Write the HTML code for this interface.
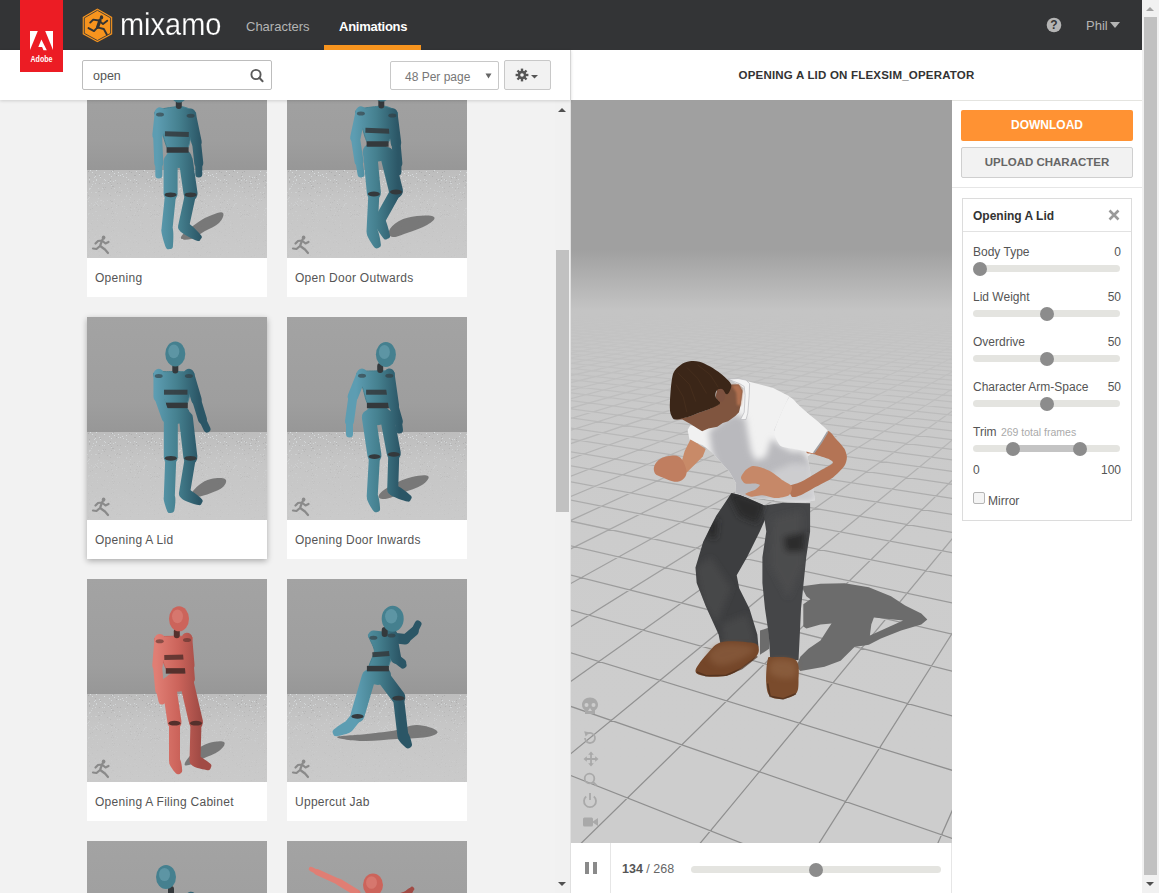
<!DOCTYPE html>
<html><head><meta charset="utf-8">
<style>
*{box-sizing:border-box;margin:0;padding:0}
html,body{width:1159px;height:893px;overflow:hidden;background:#f2f2f2;font-family:"Liberation Sans",sans-serif}
.abs{position:absolute}
svg{position:absolute;display:block}
#hdr{left:0;top:0;width:1142px;height:50px;background:#333436}
#adobe{left:20px;top:0;width:43px;height:72px;background:#ec1c24;z-index:6}
.nav{position:absolute;color:#b4b4b4;font-size:13px;top:17px;white-space:nowrap}
#left{left:0;top:0;width:571px;height:893px;background:#f2f2f2;overflow:hidden}
#searchbar{left:0;top:50px;width:571px;height:50px;background:#fff;box-shadow:0 1px 3px rgba(0,0,0,.15);z-index:3}
.card{position:absolute;width:180px;height:242px;background:#fff}
.card .img{position:absolute;left:0;top:0;width:180px;height:203px;overflow:hidden}
.card .lbl{position:absolute;left:8px;top:216px;font-size:12px;letter-spacing:0.28px;color:#555;white-space:nowrap}
#title{left:571px;top:50px;width:571px;height:50px;background:#fff;z-index:2}
#vp{left:571px;top:100px;width:381px;height:743px;z-index:1;overflow:hidden;background:#cbcbcb}
#ctrl{left:571px;top:843px;width:380px;height:50px;background:#fff}
#side{left:951px;top:100px;width:191px;height:793px;background:#fff;border-left:1px solid #e6e6e6}
.btn{position:absolute;left:10px;width:172px;border-radius:2px;text-align:center;font-weight:bold;font-size:12px;white-space:nowrap}
.lab{position:absolute;left:10px;font-size:12px;color:#555;white-space:nowrap}
.val{position:absolute;right:10px;font-size:12px;color:#555}
.trk{position:absolute;left:10px;width:147px;height:7px;border-radius:4px;background:#e4e4e0}
.thm{position:absolute;width:14px;height:14px;border-radius:50%;background:#8c8c8c}
#psb{left:1142px;top:0;width:17px;height:893px;background:#f1f1f1}

</style></head><body>
<div id="left" class="abs">
<svg width="0" height="0" style="position:absolute;left:0;top:0"><defs><pattern id="spk" width="90" height="60" patternUnits="userSpaceOnUse"><path fill="#dde2e4" d="M57 55h1v1h-1zM71 54h1v1h-1zM59 28h1v1h-1zM65 54h1v1h-1zM75 12h1v1h-1zM23 51h1v1h-1zM65 30h1v1h-1zM80 39h1v1h-1zM23 6h1v1h-1zM57 19h1v1h-1zM18 5h1v1h-1zM68 51h1v1h-1zM88 40h1v1h-1zM5 38h1v1h-1zM50 28h1v1h-1zM83 47h1v1h-1zM78 41h1v1h-1zM20 39h1v1h-1zM1 53h1v1h-1zM67 4h1v1h-1zM7 2h1v1h-1zM24 56h1v1h-1zM30 38h1v1h-1zM3 49h1v1h-1zM59 20h1v1h-1zM56 37h1v1h-1zM25 33h1v1h-1zM29 40h1v1h-1zM37 31h1v1h-1zM0 42h1v1h-1zM10 29h1v1h-1zM83 17h1v1h-1zM52 35h1v1h-1zM10 45h1v1h-1zM32 20h1v1h-1zM29 32h1v1h-1zM36 1h1v1h-1zM8 36h1v1h-1zM13 25h1v1h-1zM13 54h1v1h-1zM37 24h1v1h-1zM8 1h1v1h-1zM87 0h1v1h-1zM27 13h1v1h-1zM6 30h1v1h-1zM48 45h1v1h-1zM50 26h1v1h-1zM9 36h1v1h-1zM80 12h1v1h-1zM86 17h1v1h-1zM43 5h1v1h-1zM39 21h1v1h-1zM1 26h1v1h-1zM15 8h1v1h-1zM31 45h1v1h-1zM12 0h1v1h-1zM7 29h1v1h-1zM62 11h1v1h-1zM87 35h1v1h-1zM24 28h1v1h-1zM65 12h1v1h-1zM16 26h1v1h-1zM82 24h1v1h-1zM14 25h1v1h-1zM53 13h1v1h-1zM0 17h1v1h-1zM75 19h1v1h-1zM2 13h1v1h-1zM23 25h1v1h-1zM77 41h1v1h-1zM73 6h1v1h-1zM5 9h1v1h-1zM27 28h1v1h-1zM33 0h1v1h-1zM78 21h1v1h-1zM37 24h1v1h-1zM9 4h1v1h-1zM11 13h1v1h-1zM74 40h1v1h-1zM31 0h1v1h-1zM76 23h1v1h-1zM47 39h1v1h-1zM58 8h1v1h-1zM75 30h1v1h-1zM73 8h1v1h-1zM49 11h1v1h-1zM80 9h1v1h-1zM39 58h1v1h-1zM29 52h1v1h-1zM78 15h1v1h-1zM24 10h1v1h-1zM80 35h1v1h-1zM25 43h1v1h-1zM49 56h1v1h-1zM61 38h1v1h-1zM10 26h1v1h-1zM6 6h1v1h-1zM13 2h1v1h-1zM65 16h1v1h-1zM30 47h1v1h-1zM50 16h1v1h-1zM53 52h1v1h-1zM76 31h1v1h-1zM37 33h1v1h-1zM22 59h1v1h-1zM8 8h1v1h-1zM29 30h1v1h-1zM71 41h1v1h-1zM78 39h1v1h-1zM9 17h1v1h-1zM27 58h1v1h-1zM26 47h1v1h-1zM2 4h1v1h-1zM34 26h1v1h-1zM57 15h1v1h-1zM7 2h1v1h-1zM22 18h1v1h-1zM47 33h1v1h-1zM73 8h1v1h-1zM11 23h1v1h-1zM17 57h1v1h-1zM57 21h1v1h-1zM84 46h1v1h-1zM88 33h1v1h-1zM74 8h1v1h-1zM75 2h1v1h-1zM2 30h1v1h-1zM45 44h1v1h-1zM39 2h1v1h-1zM2 38h1v1h-1zM81 4h1v1h-1zM61 4h1v1h-1zM39 20h1v1h-1zM17 4h1v1h-1zM9 28h1v1h-1zM69 23h1v1h-1zM5 57h1v1h-1zM16 50h1v1h-1zM43 22h1v1h-1zM10 43h1v1h-1zM60 57h1v1h-1zM9 55h1v1h-1zM53 50h1v1h-1zM3 55h1v1h-1zM63 36h1v1h-1zM1 39h1v1h-1zM84 24h1v1h-1zM48 37h1v1h-1zM1 38h1v1h-1zM9 5h1v1h-1zM11 40h1v1h-1zM14 16h1v1h-1zM53 46h1v1h-1zM42 24h1v1h-1zM88 37h1v1h-1zM58 28h1v1h-1zM59 53h1v1h-1zM69 5h1v1h-1zM66 48h1v1h-1zM65 1h1v1h-1zM39 38h1v1h-1zM11 30h1v1h-1zM2 14h1v1h-1zM89 7h1v1h-1zM63 49h1v1h-1zM78 42h1v1h-1zM62 16h1v1h-1zM1 23h1v1h-1zM38 9h1v1h-1zM86 39h1v1h-1zM25 33h1v1h-1zM21 48h1v1h-1zM43 42h1v1h-1zM56 31h1v1h-1zM30 20h1v1h-1zM51 42h1v1h-1zM32 12h1v1h-1zM81 27h1v1h-1zM25 56h1v1h-1zM27 24h1v1h-1zM28 37h1v1h-1zM40 13h1v1h-1zM17 8h1v1h-1zM63 22h1v1h-1zM5 45h1v1h-1zM8 17h1v1h-1zM21 7h1v1h-1zM57 30h1v1h-1zM35 59h1v1h-1zM27 53h1v1h-1zM52 24h1v1h-1zM80 33h1v1h-1zM63 43h1v1h-1zM40 45h1v1h-1zM79 28h1v1h-1zM41 4h1v1h-1zM4 17h1v1h-1zM77 2h1v1h-1zM86 45h1v1h-1zM35 36h1v1h-1zM45 19h1v1h-1zM83 50h1v1h-1zM72 1h1v1h-1zM82 8h1v1h-1zM51 29h1v1h-1zM24 1h1v1h-1zM34 15h1v1h-1zM18 50h1v1h-1zM6 40h1v1h-1zM14 28h1v1h-1zM13 40h1v1h-1zM68 41h1v1h-1zM81 51h1v1h-1zM47 4h1v1h-1zM87 12h1v1h-1zM25 52h1v1h-1zM60 16h1v1h-1zM22 45h1v1h-1zM1 48h1v1h-1zM60 34h1v1h-1zM4 11h1v1h-1zM28 17h1v1h-1zM44 34h1v1h-1zM89 33h1v1h-1zM64 39h1v1h-1zM20 25h1v1h-1zM89 57h1v1h-1zM28 5h1v1h-1zM52 59h1v1h-1zM49 8h1v1h-1zM57 29h1v1h-1zM25 40h1v1h-1zM0 24h1v1h-1zM70 36h1v1h-1zM83 56h1v1h-1zM64 50h1v1h-1zM43 29h1v1h-1zM41 41h1v1h-1zM26 6h1v1h-1zM82 59h1v1h-1zM15 13h1v1h-1zM31 57h1v1h-1zM49 5h1v1h-1zM39 34h1v1h-1zM41 16h1v1h-1zM2 22h1v1h-1zM64 5h1v1h-1zM4 28h1v1h-1zM43 35h1v1h-1zM53 49h1v1h-1zM35 31h1v1h-1zM3 13h1v1h-1zM8 27h1v1h-1zM4 11h1v1h-1zM68 21h1v1h-1zM87 50h1v1h-1zM17 30h1v1h-1zM19 33h1v1h-1zM66 53h1v1h-1zM86 44h1v1h-1z"/><path fill="#a9a9a9" d="M56 56h1v1h-1zM63 37h1v1h-1zM88 5h1v1h-1zM28 28h1v1h-1zM67 35h1v1h-1zM37 53h1v1h-1zM71 40h1v1h-1zM21 33h1v1h-1zM65 53h1v1h-1zM71 16h1v1h-1zM39 42h1v1h-1zM48 54h1v1h-1zM78 13h1v1h-1zM38 54h1v1h-1zM18 34h1v1h-1zM67 17h1v1h-1zM73 31h1v1h-1zM25 26h1v1h-1zM68 7h1v1h-1zM64 0h1v1h-1zM77 24h1v1h-1zM3 34h1v1h-1zM5 33h1v1h-1zM51 34h1v1h-1zM72 7h1v1h-1zM62 5h1v1h-1zM88 10h1v1h-1zM8 59h1v1h-1zM68 29h1v1h-1zM52 58h1v1h-1zM51 17h1v1h-1zM31 30h1v1h-1zM63 8h1v1h-1zM43 27h1v1h-1zM60 33h1v1h-1zM40 6h1v1h-1zM24 26h1v1h-1zM79 1h1v1h-1zM33 8h1v1h-1zM89 49h1v1h-1zM2 2h1v1h-1zM24 9h1v1h-1zM29 0h1v1h-1zM87 18h1v1h-1zM41 46h1v1h-1zM45 15h1v1h-1zM79 31h1v1h-1zM13 31h1v1h-1zM74 7h1v1h-1zM65 39h1v1h-1zM32 45h1v1h-1zM25 44h1v1h-1zM67 56h1v1h-1zM55 1h1v1h-1zM48 40h1v1h-1zM52 52h1v1h-1zM67 39h1v1h-1zM20 34h1v1h-1zM26 55h1v1h-1zM80 34h1v1h-1zM81 13h1v1h-1zM67 13h1v1h-1zM69 39h1v1h-1zM75 54h1v1h-1zM17 14h1v1h-1zM80 51h1v1h-1zM44 57h1v1h-1zM23 20h1v1h-1zM77 20h1v1h-1zM24 13h1v1h-1zM24 56h1v1h-1zM12 8h1v1h-1zM30 8h1v1h-1zM11 16h1v1h-1zM49 6h1v1h-1zM55 53h1v1h-1zM53 34h1v1h-1zM16 12h1v1h-1zM51 40h1v1h-1zM87 51h1v1h-1zM2 6h1v1h-1zM25 36h1v1h-1zM87 22h1v1h-1zM46 7h1v1h-1zM64 40h1v1h-1zM43 32h1v1h-1zM87 53h1v1h-1zM24 51h1v1h-1zM9 30h1v1h-1zM13 1h1v1h-1zM4 48h1v1h-1zM70 39h1v1h-1zM65 57h1v1h-1zM72 30h1v1h-1zM18 12h1v1h-1zM23 7h1v1h-1zM26 11h1v1h-1zM20 18h1v1h-1zM86 6h1v1h-1zM74 3h1v1h-1zM17 43h1v1h-1zM59 4h1v1h-1zM12 20h1v1h-1zM50 29h1v1h-1zM54 32h1v1h-1zM45 27h1v1h-1zM26 38h1v1h-1zM47 0h1v1h-1zM81 44h1v1h-1zM5 54h1v1h-1zM25 11h1v1h-1zM52 29h1v1h-1zM46 47h1v1h-1zM47 25h1v1h-1zM24 38h1v1h-1zM21 6h1v1h-1zM65 50h1v1h-1zM1 20h1v1h-1zM10 51h1v1h-1zM80 25h1v1h-1zM72 38h1v1h-1zM24 32h1v1h-1zM74 21h1v1h-1zM33 17h1v1h-1zM14 47h1v1h-1zM20 52h1v1h-1zM51 8h1v1h-1zM42 56h1v1h-1zM68 44h1v1h-1zM47 49h1v1h-1zM55 48h1v1h-1zM23 25h1v1h-1zM26 46h1v1h-1zM23 4h1v1h-1zM43 19h1v1h-1zM60 6h1v1h-1zM1 56h1v1h-1zM45 40h1v1h-1zM79 3h1v1h-1zM29 17h1v1h-1zM85 19h1v1h-1zM43 13h1v1h-1zM84 25h1v1h-1zM72 11h1v1h-1zM68 4h1v1h-1zM49 32h1v1h-1zM63 41h1v1h-1zM27 44h1v1h-1zM15 48h1v1h-1zM50 36h1v1h-1zM2 7h1v1h-1zM78 6h1v1h-1zM30 16h1v1h-1zM56 25h1v1h-1zM64 3h1v1h-1zM25 41h1v1h-1zM48 0h1v1h-1zM12 16h1v1h-1zM32 17h1v1h-1zM43 35h1v1h-1z"/></pattern><linearGradient id="spkm" x1="0" y1="0" x2="0" y2="1"><stop offset="0" stop-color="#fff" stop-opacity="0.85"/><stop offset="0.25" stop-color="#fff" stop-opacity="0.4"/><stop offset="0.6" stop-color="#fff" stop-opacity="0.15"/><stop offset="1" stop-color="#fff" stop-opacity="0.1"/></linearGradient><mask id="spkmask" maskContentUnits="userSpaceOnUse"><rect y="115" width="180" height="88" fill="url(#spkm)"/></mask></defs></svg><div class="card" style="left:87px;top:55px"><svg width="180" height="203" style="left:0;top:0"><defs><linearGradient id="fl0" x1="0" y1="0" x2="0" y2="1"><stop offset="0" stop-color="#bdbdbd"/><stop offset="0.35" stop-color="#c6c6c6"/><stop offset="1" stop-color="#cacaca"/></linearGradient><linearGradient id="wl0" x1="0" y1="0" x2="0" y2="1"><stop offset="0" stop-color="#a3a3a3"/><stop offset="0.75" stop-color="#9e9e9e"/><stop offset="1" stop-color="#979797"/></linearGradient></defs><rect width="180" height="115" fill="url(#wl0)"/><rect y="115" width="180" height="88" fill="url(#fl0)"/><rect y="115" width="180" height="88" fill="url(#spk)" mask="url(#spkmask)"/><defs><linearGradient id="rg1" gradientUnits="userSpaceOnUse" x1="70" y1="0" x2="114" y2="0"><stop offset="0" stop-color="#5d9db2"/><stop offset="0.5" stop-color="#45808f"/><stop offset="1" stop-color="#2b5666"/></linearGradient></defs><path d="M94.0,182.0 C95.2,178.8 103.8,172.4 110.0,168.0 C116.2,163.6 119.8,162.0 125.0,160.0 C130.2,158.0 134.6,156.4 136.0,158.0 C137.4,159.6 135.6,164.4 132.0,168.0 C128.4,171.6 123.6,172.8 118.0,176.0 C112.4,179.2 108.8,182.8 104.0,184.0 C99.2,185.2 92.8,185.2 94.0,182.0 Z" fill="#6a6a6a" opacity="0.85"/><line x1="98.9" y1="106.0" x2="103.6" y2="138.8" stroke="url(#rg1)" stroke-width="14" stroke-linecap="round"/><line x1="103.6" y1="138.8" x2="96.5" y2="171.8" stroke="url(#rg1)" stroke-width="11" stroke-linecap="round"/><path d="M93.3,176.3 C94.6,178.7 107.2,184.8 110.0,185.8 C112.7,186.9 113.1,184.9 113.6,184.2 C114.2,183.4 115.9,182.4 114.0,180.2 C112.2,177.9 102.5,167.9 99.7,167.3 C97.0,166.8 91.9,173.8 93.3,176.3 Z" fill="url(#rg1)"/><ellipse cx="103.6" cy="139.8" rx="6" ry="2.4" fill="#34393c"/><line x1="83.6" y1="106.0" x2="83.6" y2="138.8" stroke="url(#rg1)" stroke-width="14" stroke-linecap="round"/><line x1="83.6" y1="138.8" x2="80.0" y2="174.0" stroke="url(#rg1)" stroke-width="11" stroke-linecap="round"/><path d="M74.5,174.7 C73.7,177.3 77.8,189.9 78.9,192.5 C80.0,195.0 81.7,194.1 82.7,194.0 C83.6,193.9 85.5,194.3 85.9,191.5 C86.2,188.8 87.0,175.5 85.5,173.3 C83.9,171.0 75.4,172.2 74.5,174.7 Z" fill="url(#rg1)"/><ellipse cx="83.6" cy="139.8" rx="6" ry="2.4" fill="#34393c"/><ellipse cx="91.8" cy="103.0" rx="13" ry="10" fill="url(#rg1)"/><path d="M68.0,56.6 C69.5,54.2 83.4,52.5 86.8,52.0 C90.2,51.5 94.3,51.3 96.8,52.0 C99.3,52.7 107.6,55.3 108.6,57.8 C109.6,60.3 106.6,69.5 105.6,73.8 C104.5,78.1 102.4,92.5 99.6,95.0 C96.8,97.5 84.6,97.6 81.6,95.0 C78.6,92.4 75.6,77.1 74.0,72.6 C72.4,68.1 66.5,59.0 68.0,56.6 Z" fill="url(#rg1)" stroke="#45808f" stroke-width="1"/><line x1="77.9" y1="78.8" x2="101.8" y2="79.4" stroke="#34393c" stroke-width="5" stroke-linecap="butt" opacity="0.85"/><line x1="79.6" y1="95.0" x2="101.6" y2="95.0" stroke="#34393c" stroke-width="5.5" stroke-linecap="butt" opacity="1"/><line x1="73.0" y1="57.6" x2="70.6" y2="80.0" stroke="url(#rg1)" stroke-width="10.5" stroke-linecap="round"/><line x1="70.6" y1="80.0" x2="71.8" y2="108.2" stroke="url(#rg1)" stroke-width="9.0" stroke-linecap="round"/><line x1="71.8" y1="108.2" x2="71.8" y2="120.0" stroke="url(#rg1)" stroke-width="7.0" stroke-linecap="round"/><ellipse cx="73.0" cy="59.6" rx="4" ry="2" fill="#34393c" opacity="0.6"/><line x1="103.6" y1="58.8" x2="109.5" y2="87.0" stroke="url(#rg1)" stroke-width="10.5" stroke-linecap="round"/><line x1="109.5" y1="87.0" x2="111.8" y2="108.2" stroke="url(#rg1)" stroke-width="9.0" stroke-linecap="round"/><line x1="111.8" y1="108.2" x2="111.8" y2="119.0" stroke="url(#rg1)" stroke-width="7.0" stroke-linecap="round"/><ellipse cx="103.6" cy="60.8" rx="4" ry="2" fill="#34393c" opacity="0.6"/><line x1="91.8" y1="47.0" x2="91.8" y2="51.0" stroke="#34393c" stroke-width="6" stroke-linecap="round"/><ellipse cx="92.0" cy="36.0" rx="9" ry="11.5" fill="#45808f"/><ellipse cx="90.5" cy="33.5" rx="5.0" ry="6.3" fill="#a8d4e2" opacity="0.25"/><g fill="none" stroke="#8a8a8a" stroke-width="2.2" stroke-linecap="round" stroke-linejoin="round"><path d="M15.5 184.5 L13 191 L9.5 194 L6 193.5 M13.2 191 L18 194.5 L21 198 M14.8 185.5 L11 186 L8.5 188.5 M15.5 186 L18.5 188.5 L21.5 187"/></g><ellipse cx="16.6" cy="182.6" rx="1.8" ry="2.2" fill="#8a8a8a"/></svg><div class="lbl">Opening</div></div>
<div class="card" style="left:287px;top:55px"><svg width="180" height="203" style="left:0;top:0"><defs><linearGradient id="fl1" x1="0" y1="0" x2="0" y2="1"><stop offset="0" stop-color="#bdbdbd"/><stop offset="0.35" stop-color="#c6c6c6"/><stop offset="1" stop-color="#cacaca"/></linearGradient><linearGradient id="wl1" x1="0" y1="0" x2="0" y2="1"><stop offset="0" stop-color="#a3a3a3"/><stop offset="0.75" stop-color="#9e9e9e"/><stop offset="1" stop-color="#979797"/></linearGradient></defs><rect width="180" height="115" fill="url(#wl1)"/><rect y="115" width="180" height="88" fill="url(#fl1)"/><rect y="115" width="180" height="88" fill="url(#spk)" mask="url(#spkmask)"/><defs><linearGradient id="rg2" gradientUnits="userSpaceOnUse" x1="67" y1="0" x2="111" y2="0"><stop offset="0" stop-color="#5d9db2"/><stop offset="0.5" stop-color="#45808f"/><stop offset="1" stop-color="#2b5666"/></linearGradient></defs><path d="M102.0,176.0 C103.2,172.8 106.4,169.0 112.0,166.0 C117.6,163.0 123.0,161.8 130.0,161.0 C137.0,160.2 145.0,160.2 147.0,162.0 C149.0,163.8 145.4,166.8 140.0,170.0 C134.6,173.2 126.8,175.6 120.0,178.0 C113.2,180.4 109.6,182.4 106.0,182.0 C102.4,181.6 100.8,179.2 102.0,176.0 Z" fill="#6a6a6a" opacity="0.85"/><line x1="99.8" y1="99.0" x2="109.0" y2="136.0" stroke="url(#rg2)" stroke-width="14" stroke-linecap="round"/><line x1="109.0" y1="136.0" x2="92.4" y2="165.7" stroke="url(#rg2)" stroke-width="11" stroke-linecap="round"/><path d="M87.4,168.0 C87.3,170.6 94.8,181.3 96.6,183.4 C98.4,185.6 99.8,184.2 100.6,183.8 C101.5,183.4 103.4,183.3 103.0,180.6 C102.6,177.8 99.5,165.1 97.4,163.4 C95.3,161.7 87.5,165.3 87.4,168.0 Z" fill="url(#rg2)"/><ellipse cx="109.0" cy="137.0" rx="6" ry="2.4" fill="#34393c"/><line x1="83.2" y1="99.0" x2="86.9" y2="138.0" stroke="url(#rg2)" stroke-width="14" stroke-linecap="round"/><line x1="86.9" y1="138.0" x2="85.0" y2="176.8" stroke="url(#rg2)" stroke-width="11" stroke-linecap="round"/><path d="M79.9,178.8 C79.5,181.2 85.8,190.4 87.3,192.3 C88.9,194.2 90.5,193.2 91.3,192.9 C92.2,192.5 94.0,192.1 93.9,189.7 C93.7,187.3 92.0,176.2 90.1,174.8 C88.3,173.3 80.3,176.5 79.9,178.8 Z" fill="url(#rg2)"/><ellipse cx="86.9" cy="139.0" rx="6" ry="2.4" fill="#34393c"/><ellipse cx="88.7" cy="97.0" rx="13" ry="10" fill="url(#rg2)"/><path d="M68.9,55.6 C70.6,53.3 85.8,52.0 89.3,51.5 C92.8,51.0 96.8,50.8 99.3,51.5 C101.8,52.2 109.4,54.9 110.3,57.5 C111.2,60.1 108.5,69.8 107.3,73.5 C106.1,77.2 102.6,87.2 99.6,89.0 C96.6,90.8 84.5,91.0 81.6,89.0 C78.7,87.0 76.4,75.5 74.9,71.6 C73.4,67.7 67.2,57.9 68.9,55.6 Z" fill="url(#rg2)" stroke="#45808f" stroke-width="1"/><line x1="78.4" y1="75.3" x2="102.7" y2="76.2" stroke="#34393c" stroke-width="5" stroke-linecap="butt" opacity="0.85"/><line x1="79.6" y1="89.0" x2="101.6" y2="89.0" stroke="#34393c" stroke-width="5.5" stroke-linecap="butt" opacity="1"/><line x1="73.9" y1="56.6" x2="68.4" y2="82.5" stroke="url(#rg2)" stroke-width="10.5" stroke-linecap="round"/><line x1="68.4" y1="82.5" x2="72.0" y2="106.5" stroke="url(#rg2)" stroke-width="9.0" stroke-linecap="round"/><line x1="72.0" y1="106.5" x2="74.0" y2="119.0" stroke="url(#rg2)" stroke-width="7.0" stroke-linecap="round"/><ellipse cx="73.9" cy="58.6" rx="4" ry="2" fill="#34393c" opacity="0.6"/><line x1="105.3" y1="58.5" x2="109.0" y2="88.0" stroke="url(#rg2)" stroke-width="10.5" stroke-linecap="round"/><line x1="109.0" y1="88.0" x2="110.9" y2="108.4" stroke="url(#rg2)" stroke-width="9.0" stroke-linecap="round"/><line x1="110.9" y1="108.4" x2="110.9" y2="117.0" stroke="url(#rg2)" stroke-width="7.0" stroke-linecap="round"/><ellipse cx="105.3" cy="60.5" rx="4" ry="2" fill="#34393c" opacity="0.6"/><line x1="94.3" y1="46.5" x2="94.3" y2="50.5" stroke="#34393c" stroke-width="6" stroke-linecap="round"/><ellipse cx="95.0" cy="35.0" rx="9" ry="11.5" fill="#45808f"/><ellipse cx="93.5" cy="32.5" rx="5.0" ry="6.3" fill="#a8d4e2" opacity="0.25"/><g fill="none" stroke="#8a8a8a" stroke-width="2.2" stroke-linecap="round" stroke-linejoin="round"><path d="M15.5 184.5 L13 191 L9.5 194 L6 193.5 M13.2 191 L18 194.5 L21 198 M14.8 185.5 L11 186 L8.5 188.5 M15.5 186 L18.5 188.5 L21.5 187"/></g><ellipse cx="16.6" cy="182.6" rx="1.8" ry="2.2" fill="#8a8a8a"/></svg><div class="lbl">Open Door Outwards</div></div>
<div class="card" style="left:87px;top:317px;box-shadow:0 2px 6px rgba(0,0,0,.3)"><svg width="180" height="203" style="left:0;top:0"><defs><linearGradient id="fl2" x1="0" y1="0" x2="0" y2="1"><stop offset="0" stop-color="#bdbdbd"/><stop offset="0.35" stop-color="#c6c6c6"/><stop offset="1" stop-color="#cacaca"/></linearGradient><linearGradient id="wl2" x1="0" y1="0" x2="0" y2="1"><stop offset="0" stop-color="#a3a3a3"/><stop offset="0.75" stop-color="#9e9e9e"/><stop offset="1" stop-color="#979797"/></linearGradient></defs><rect width="180" height="115" fill="url(#wl2)"/><rect y="115" width="180" height="88" fill="url(#fl2)"/><rect y="115" width="180" height="88" fill="url(#spk)" mask="url(#spkmask)"/><defs><linearGradient id="rg3" gradientUnits="userSpaceOnUse" x1="68" y1="0" x2="112" y2="0"><stop offset="0" stop-color="#5d9db2"/><stop offset="0.5" stop-color="#45808f"/><stop offset="1" stop-color="#2b5666"/></linearGradient></defs><path d="M104.0,178.0 C104.4,175.6 108.0,171.2 112.0,168.0 C116.0,164.8 118.8,163.2 124.0,162.0 C129.2,160.8 135.6,160.4 138.0,162.0 C140.4,163.6 138.8,167.2 136.0,170.0 C133.2,172.8 129.2,174.0 124.0,176.0 C118.8,178.0 114.0,179.6 110.0,180.0 C106.0,180.4 103.6,180.4 104.0,178.0 Z" fill="#6a6a6a" opacity="0.85"/><line x1="98.9" y1="101.0" x2="103.4" y2="140.3" stroke="url(#rg3)" stroke-width="14" stroke-linecap="round"/><line x1="103.4" y1="140.3" x2="97.4" y2="176.6" stroke="url(#rg3)" stroke-width="11" stroke-linecap="round"/><path d="M94.8,181.4 C96.3,183.6 108.7,187.5 111.3,188.1 C114.0,188.7 114.3,186.8 114.8,185.9 C115.2,185.1 116.6,183.8 114.7,181.9 C112.7,180.0 102.7,171.8 100.0,171.8 C97.4,171.7 93.3,179.3 94.8,181.4 Z" fill="url(#rg3)"/><ellipse cx="103.4" cy="141.3" rx="6" ry="2.4" fill="#34393c"/><line x1="83.8" y1="101.0" x2="83.8" y2="140.3" stroke="url(#rg3)" stroke-width="14" stroke-linecap="round"/><line x1="83.8" y1="140.3" x2="82.3" y2="179.7" stroke="url(#rg3)" stroke-width="11" stroke-linecap="round"/><path d="M76.8,180.3 C75.8,182.3 79.4,192.3 80.3,194.4 C81.3,196.5 83.1,196.1 84.0,196.0 C84.9,195.9 86.8,195.9 87.3,193.6 C87.8,191.4 89.2,180.9 87.8,179.1 C86.4,177.3 77.8,178.2 76.8,180.3 Z" fill="url(#rg3)"/><ellipse cx="83.8" cy="141.3" rx="6" ry="2.4" fill="#34393c"/><ellipse cx="89.8" cy="97.0" rx="13" ry="10" fill="url(#rg3)"/><path d="M66.7,56.1 C67.9,54.1 80.2,54.8 83.3,54.6 C86.4,54.4 90.5,54.4 93.3,54.6 C96.1,54.8 105.7,54.1 106.9,56.1 C108.1,58.1 104.8,68.3 103.9,72.1 C103.0,75.9 101.5,86.5 98.8,88.4 C96.1,90.3 83.8,90.3 80.8,88.4 C77.8,86.5 74.3,75.9 72.7,72.1 C71.1,68.3 65.5,58.1 66.7,56.1 Z" fill="url(#rg3)" stroke="#45808f" stroke-width="1"/><line x1="76.8" y1="75.2" x2="100.5" y2="75.2" stroke="#34393c" stroke-width="5" stroke-linecap="butt" opacity="0.85"/><line x1="78.8" y1="88.4" x2="100.8" y2="88.4" stroke="#34393c" stroke-width="5.5" stroke-linecap="butt" opacity="1"/><line x1="71.7" y1="57.1" x2="71.7" y2="79.8" stroke="url(#rg3)" stroke-width="10.5" stroke-linecap="round"/><line x1="71.7" y1="79.8" x2="79.2" y2="101.0" stroke="url(#rg3)" stroke-width="9.0" stroke-linecap="round"/><line x1="79.2" y1="101.0" x2="83.8" y2="112.0" stroke="url(#rg3)" stroke-width="7.0" stroke-linecap="round"/><ellipse cx="71.7" cy="59.1" rx="4" ry="2" fill="#34393c" opacity="0.6"/><line x1="101.9" y1="57.1" x2="109.5" y2="82.8" stroke="url(#rg3)" stroke-width="10.5" stroke-linecap="round"/><line x1="109.5" y1="82.8" x2="115.5" y2="102.5" stroke="url(#rg3)" stroke-width="9.0" stroke-linecap="round"/><line x1="115.5" y1="102.5" x2="120.0" y2="112.0" stroke="url(#rg3)" stroke-width="7.0" stroke-linecap="round"/><ellipse cx="101.9" cy="59.1" rx="4" ry="2" fill="#34393c" opacity="0.6"/><line x1="88.3" y1="49.6" x2="88.3" y2="53.6" stroke="#34393c" stroke-width="6" stroke-linecap="round"/><ellipse cx="88.3" cy="36.9" rx="10" ry="12.5" fill="#45808f"/><ellipse cx="86.8" cy="34.4" rx="5.5" ry="6.9" fill="#a8d4e2" opacity="0.25"/><g fill="none" stroke="#8a8a8a" stroke-width="2.2" stroke-linecap="round" stroke-linejoin="round"><path d="M15.5 184.5 L13 191 L9.5 194 L6 193.5 M13.2 191 L18 194.5 L21 198 M14.8 185.5 L11 186 L8.5 188.5 M15.5 186 L18.5 188.5 L21.5 187"/></g><ellipse cx="16.6" cy="182.6" rx="1.8" ry="2.2" fill="#8a8a8a"/></svg><div class="lbl">Opening A Lid</div></div>
<div class="card" style="left:287px;top:317px"><svg width="180" height="203" style="left:0;top:0"><defs><linearGradient id="fl3" x1="0" y1="0" x2="0" y2="1"><stop offset="0" stop-color="#bdbdbd"/><stop offset="0.35" stop-color="#c6c6c6"/><stop offset="1" stop-color="#cacaca"/></linearGradient><linearGradient id="wl3" x1="0" y1="0" x2="0" y2="1"><stop offset="0" stop-color="#a3a3a3"/><stop offset="0.75" stop-color="#9e9e9e"/><stop offset="1" stop-color="#979797"/></linearGradient></defs><rect width="180" height="115" fill="url(#wl3)"/><rect y="115" width="180" height="88" fill="url(#fl3)"/><rect y="115" width="180" height="88" fill="url(#spk)" mask="url(#spkmask)"/><defs><linearGradient id="rg4" gradientUnits="userSpaceOnUse" x1="69" y1="0" x2="113" y2="0"><stop offset="0" stop-color="#5d9db2"/><stop offset="0.5" stop-color="#45808f"/><stop offset="1" stop-color="#2b5666"/></linearGradient></defs><path d="M92.0,178.0 C93.4,175.2 98.4,171.6 105.0,168.0 C111.6,164.4 117.8,161.8 125.0,160.0 C132.2,158.2 139.0,157.4 141.0,159.0 C143.0,160.6 140.2,164.6 135.0,168.0 C129.8,171.4 122.4,173.2 115.0,176.0 C107.6,178.8 102.6,181.6 98.0,182.0 C93.4,182.4 90.6,180.8 92.0,178.0 Z" fill="#6a6a6a" opacity="0.85"/><line x1="100.0" y1="100.0" x2="106.8" y2="136.4" stroke="url(#rg4)" stroke-width="14" stroke-linecap="round"/><line x1="106.8" y1="136.4" x2="105.7" y2="172.7" stroke="url(#rg4)" stroke-width="11" stroke-linecap="round"/><path d="M103.1,177.5 C104.7,179.8 117.6,183.9 120.3,184.6 C123.1,185.2 123.3,183.3 123.8,182.5 C124.2,181.6 125.7,180.4 123.7,178.4 C121.6,176.5 111.1,168.0 108.3,167.9 C105.6,167.7 101.5,175.3 103.1,177.5 Z" fill="url(#rg4)"/><ellipse cx="106.8" cy="137.4" rx="6" ry="2.4" fill="#34393c"/><line x1="81.8" y1="100.0" x2="87.5" y2="138.6" stroke="url(#rg4)" stroke-width="14" stroke-linecap="round"/><line x1="87.5" y1="138.6" x2="85.2" y2="179.5" stroke="url(#rg4)" stroke-width="11" stroke-linecap="round"/><path d="M80.0,181.3 C79.5,183.5 85.1,192.3 86.5,194.1 C87.9,195.9 89.6,195.2 90.4,194.9 C91.3,194.6 93.1,194.2 93.1,191.9 C93.1,189.6 92.2,179.1 90.4,177.7 C88.7,176.3 80.5,179.1 80.0,181.3 Z" fill="url(#rg4)"/><ellipse cx="87.5" cy="139.6" rx="6" ry="2.4" fill="#34393c"/><ellipse cx="90.9" cy="98.3" rx="13" ry="10" fill="url(#rg4)"/><path d="M70.0,55.8 C71.4,53.7 84.9,54.1 88.2,53.9 C91.5,53.7 96.0,53.7 98.2,53.9 C100.4,54.1 106.6,53.7 107.3,55.8 C108.0,57.9 105.2,68.0 104.3,71.8 C103.4,75.6 102.5,86.6 99.9,88.5 C97.3,90.4 84.7,90.4 81.9,88.5 C79.1,86.6 77.4,75.6 76.0,71.8 C74.6,68.0 68.6,57.9 70.0,55.8 Z" fill="url(#rg4)" stroke="#45808f" stroke-width="1"/><line x1="79.1" y1="75.2" x2="101.2" y2="75.2" stroke="#34393c" stroke-width="5" stroke-linecap="butt" opacity="0.85"/><line x1="79.9" y1="88.5" x2="101.9" y2="88.5" stroke="#34393c" stroke-width="5.5" stroke-linecap="butt" opacity="1"/><line x1="75.0" y1="56.8" x2="65.9" y2="79.5" stroke="url(#rg4)" stroke-width="10.5" stroke-linecap="round"/><line x1="65.9" y1="79.5" x2="62.5" y2="104.5" stroke="url(#rg4)" stroke-width="9.0" stroke-linecap="round"/><line x1="62.5" y1="104.5" x2="62.5" y2="117.0" stroke="url(#rg4)" stroke-width="7.0" stroke-linecap="round"/><ellipse cx="75.0" cy="58.8" rx="4" ry="2" fill="#34393c" opacity="0.6"/><line x1="102.3" y1="56.8" x2="106.8" y2="88.6" stroke="url(#rg4)" stroke-width="10.5" stroke-linecap="round"/><line x1="106.8" y1="88.6" x2="111.4" y2="104.5" stroke="url(#rg4)" stroke-width="9.0" stroke-linecap="round"/><line x1="111.4" y1="104.5" x2="112.5" y2="113.0" stroke="url(#rg4)" stroke-width="7.0" stroke-linecap="round"/><ellipse cx="102.3" cy="58.8" rx="4" ry="2" fill="#34393c" opacity="0.6"/><line x1="93.2" y1="48.9" x2="93.2" y2="52.9" stroke="#34393c" stroke-width="6" stroke-linecap="round"/><ellipse cx="98.9" cy="37.5" rx="10" ry="12.5" fill="#45808f"/><ellipse cx="97.4" cy="35.0" rx="5.5" ry="6.9" fill="#a8d4e2" opacity="0.25"/><g fill="none" stroke="#8a8a8a" stroke-width="2.2" stroke-linecap="round" stroke-linejoin="round"><path d="M15.5 184.5 L13 191 L9.5 194 L6 193.5 M13.2 191 L18 194.5 L21 198 M14.8 185.5 L11 186 L8.5 188.5 M15.5 186 L18.5 188.5 L21.5 187"/></g><ellipse cx="16.6" cy="182.6" rx="1.8" ry="2.2" fill="#8a8a8a"/></svg><div class="lbl">Opening Door Inwards</div></div>
<div class="card" style="left:87px;top:579px"><svg width="180" height="203" style="left:0;top:0"><defs><linearGradient id="fl4" x1="0" y1="0" x2="0" y2="1"><stop offset="0" stop-color="#bdbdbd"/><stop offset="0.35" stop-color="#c6c6c6"/><stop offset="1" stop-color="#cacaca"/></linearGradient><linearGradient id="wl4" x1="0" y1="0" x2="0" y2="1"><stop offset="0" stop-color="#a3a3a3"/><stop offset="0.75" stop-color="#9e9e9e"/><stop offset="1" stop-color="#979797"/></linearGradient></defs><rect width="180" height="115" fill="url(#wl4)"/><rect y="115" width="180" height="88" fill="url(#fl4)"/><rect y="115" width="180" height="88" fill="url(#spk)" mask="url(#spkmask)"/><defs><linearGradient id="rg5" gradientUnits="userSpaceOnUse" x1="69" y1="0" x2="113" y2="0"><stop offset="0" stop-color="#e07e74"/><stop offset="0.5" stop-color="#cc645b"/><stop offset="1" stop-color="#a14b45"/></linearGradient></defs><path d="M98.0,184.0 C99.2,181.2 103.2,176.0 108.0,172.0 C112.8,168.0 116.2,165.8 122.0,164.0 C127.8,162.2 135.0,161.4 137.0,163.0 C139.0,164.6 136.4,168.6 132.0,172.0 C127.6,175.4 121.0,177.2 115.0,180.0 C109.0,182.8 105.4,185.2 102.0,186.0 C98.6,186.8 96.8,186.8 98.0,184.0 Z" fill="#6a6a6a" opacity="0.85"/><line x1="100.0" y1="104.5" x2="109.0" y2="143.2" stroke="url(#rg5)" stroke-width="14" stroke-linecap="round"/><line x1="109.0" y1="143.2" x2="108.0" y2="181.8" stroke="url(#rg5)" stroke-width="11" stroke-linecap="round"/><path d="M105.8,186.8 C107.2,188.8 118.2,190.9 120.6,191.2 C123.0,191.5 123.5,189.7 123.8,188.8 C124.2,188.0 125.2,186.4 123.4,184.8 C121.6,183.2 112.6,176.5 110.2,176.8 C107.9,177.0 104.4,184.9 105.8,186.8 Z" fill="url(#rg5)"/><ellipse cx="109.0" cy="144.2" rx="6" ry="2.4" fill="#55302c"/><line x1="81.8" y1="104.5" x2="87.5" y2="143.2" stroke="url(#rg5)" stroke-width="14" stroke-linecap="round"/><line x1="87.5" y1="143.2" x2="87.5" y2="181.8" stroke="url(#rg5)" stroke-width="11" stroke-linecap="round"/><path d="M82.4,183.9 C81.9,185.8 87.4,192.8 88.8,194.3 C90.1,195.8 91.9,195.2 92.7,194.9 C93.6,194.5 95.3,193.7 95.2,191.7 C95.2,189.7 94.3,180.8 92.6,179.7 C90.9,178.7 82.9,181.9 82.4,183.9 Z" fill="url(#rg5)"/><ellipse cx="87.5" cy="144.2" rx="6" ry="2.4" fill="#55302c"/><ellipse cx="90.9" cy="102.8" rx="13" ry="10" fill="url(#rg5)"/><path d="M67.7,59.2 C69.0,57.1 81.6,57.5 84.8,57.3 C88.0,57.1 92.4,57.2 94.8,57.3 C97.2,57.4 104.2,56.1 105.0,58.0 C105.8,59.9 102.7,70.0 102.0,74.0 C101.3,78.0 101.3,89.8 98.8,91.9 C96.3,94.0 83.7,93.8 80.8,91.9 C77.9,90.0 75.2,79.0 73.7,75.2 C72.2,71.4 66.4,61.3 67.7,59.2 Z" fill="url(#rg5)" stroke="#cc645b" stroke-width="1"/><line x1="77.3" y1="78.6" x2="99.5" y2="78.0" stroke="#55302c" stroke-width="5" stroke-linecap="butt" opacity="0.85"/><line x1="78.8" y1="91.9" x2="100.8" y2="91.9" stroke="#55302c" stroke-width="5.5" stroke-linecap="butt" opacity="1"/><line x1="72.7" y1="60.2" x2="70.5" y2="86.4" stroke="url(#rg5)" stroke-width="10.5" stroke-linecap="round"/><line x1="70.5" y1="86.4" x2="72.7" y2="111.4" stroke="url(#rg5)" stroke-width="9.0" stroke-linecap="round"/><line x1="72.7" y1="111.4" x2="75.0" y2="122.0" stroke="url(#rg5)" stroke-width="7.0" stroke-linecap="round"/><ellipse cx="72.7" cy="62.2" rx="4" ry="2" fill="#55302c" opacity="0.6"/><line x1="100.0" y1="59.0" x2="102.3" y2="86.4" stroke="url(#rg5)" stroke-width="10.5" stroke-linecap="round"/><line x1="102.3" y1="86.4" x2="103.4" y2="100.0" stroke="url(#rg5)" stroke-width="9.0" stroke-linecap="round"/><line x1="103.4" y1="100.0" x2="103.0" y2="104.0" stroke="url(#rg5)" stroke-width="7.0" stroke-linecap="round"/><ellipse cx="100.0" cy="61.0" rx="4" ry="2" fill="#55302c" opacity="0.6"/><line x1="89.8" y1="52.3" x2="89.8" y2="56.3" stroke="#55302c" stroke-width="6" stroke-linecap="round"/><ellipse cx="92.0" cy="39.8" rx="10" ry="12.5" fill="#cc645b"/><ellipse cx="90.5" cy="37.3" rx="5.5" ry="6.9" fill="#f4b0a8" opacity="0.25"/><g fill="none" stroke="#8a8a8a" stroke-width="2.2" stroke-linecap="round" stroke-linejoin="round"><path d="M15.5 184.5 L13 191 L9.5 194 L6 193.5 M13.2 191 L18 194.5 L21 198 M14.8 185.5 L11 186 L8.5 188.5 M15.5 186 L18.5 188.5 L21.5 187"/></g><ellipse cx="16.6" cy="182.6" rx="1.8" ry="2.2" fill="#8a8a8a"/></svg><div class="lbl">Opening A Filing Cabinet</div></div>
<div class="card" style="left:287px;top:579px"><svg width="180" height="203" style="left:0;top:0"><defs><linearGradient id="fl5" x1="0" y1="0" x2="0" y2="1"><stop offset="0" stop-color="#bdbdbd"/><stop offset="0.35" stop-color="#c6c6c6"/><stop offset="1" stop-color="#cacaca"/></linearGradient><linearGradient id="wl5" x1="0" y1="0" x2="0" y2="1"><stop offset="0" stop-color="#a3a3a3"/><stop offset="0.75" stop-color="#9e9e9e"/><stop offset="1" stop-color="#979797"/></linearGradient></defs><rect width="180" height="115" fill="url(#wl5)"/><rect y="115" width="180" height="88" fill="url(#fl5)"/><rect y="115" width="180" height="88" fill="url(#spk)" mask="url(#spkmask)"/><defs><linearGradient id="rg6" gradientUnits="userSpaceOnUse" x1="69" y1="0" x2="113" y2="0"><stop offset="0" stop-color="#5d9db2"/><stop offset="0.5" stop-color="#45808f"/><stop offset="1" stop-color="#2b5666"/></linearGradient></defs><path d="M50.0,158.0 C51.0,156.6 68.0,156.4 80.0,155.0 C92.0,153.6 100.0,152.8 110.0,151.0 C120.0,149.2 122.0,145.8 130.0,146.0 C138.0,146.2 148.0,149.6 150.0,152.0 C152.0,154.4 148.0,156.4 140.0,158.0 C132.0,159.6 123.0,159.2 110.0,160.0 C97.0,160.8 87.0,162.4 75.0,162.0 C63.0,161.6 49.0,159.4 50.0,158.0 Z" fill="#6a6a6a" opacity="0.85"/><line x1="97.7" y1="100.0" x2="111.4" y2="118.2" stroke="url(#rg6)" stroke-width="14" stroke-linecap="round"/><line x1="111.4" y1="118.2" x2="115.9" y2="156.8" stroke="url(#rg6)" stroke-width="11" stroke-linecap="round"/><path d="M111.2,159.6 C111.0,161.6 117.4,167.6 119.0,168.8 C120.6,170.0 122.2,169.2 123.0,168.7 C123.8,168.2 125.3,167.2 125.0,165.2 C124.7,163.2 122.5,154.7 120.6,154.0 C118.8,153.2 111.4,157.6 111.2,159.6 Z" fill="url(#rg6)"/><ellipse cx="111.4" cy="119.2" rx="6" ry="2.4" fill="#34393c"/><line x1="81.8" y1="97.7" x2="70.5" y2="136.4" stroke="url(#rg6)" stroke-width="14" stroke-linecap="round"/><line x1="70.5" y1="136.4" x2="61.4" y2="147.7" stroke="url(#rg6)" stroke-width="11" stroke-linecap="round"/><path d="M59.1,142.7 C56.8,142.5 48.2,149.2 46.5,150.8 C44.8,152.4 45.8,154.0 46.2,154.9 C46.6,155.7 47.1,157.5 49.5,157.2 C51.8,156.9 62.5,154.6 63.7,152.7 C65.0,150.8 61.4,143.0 59.1,142.7 Z" fill="url(#rg6)"/><ellipse cx="70.5" cy="137.4" rx="6" ry="2.4" fill="#34393c"/><ellipse cx="90.9" cy="96.0" rx="13" ry="10" fill="url(#rg6)"/><path d="M81.4,55.8 C82.0,54.0 90.2,56.1 92.7,56.1 C95.2,56.1 100.7,56.4 102.7,56.1 C104.7,55.8 109.1,51.9 109.5,53.5 C109.9,55.1 107.6,65.3 106.5,69.5 C105.4,73.7 102.8,87.3 99.9,89.6 C97.0,91.9 83.4,91.7 81.9,89.6 C80.4,87.5 87.5,75.7 87.4,71.8 C87.3,67.9 80.8,57.6 81.4,55.8 Z" fill="url(#rg6)" stroke="#45808f" stroke-width="1"/><line x1="85.4" y1="75.7" x2="102.4" y2="74.5" stroke="#34393c" stroke-width="5" stroke-linecap="butt" opacity="0.85"/><line x1="79.9" y1="89.6" x2="101.9" y2="89.6" stroke="#34393c" stroke-width="5.5" stroke-linecap="butt" opacity="1"/><line x1="86.4" y1="56.8" x2="118.2" y2="60.2" stroke="url(#rg6)" stroke-width="10.5" stroke-linecap="round"/><line x1="118.2" y1="60.2" x2="127.3" y2="52.3" stroke="url(#rg6)" stroke-width="9.0" stroke-linecap="round"/><line x1="127.3" y1="52.3" x2="131.0" y2="45.0" stroke="url(#rg6)" stroke-width="7.0" stroke-linecap="round"/><ellipse cx="86.4" cy="58.8" rx="4" ry="2" fill="#34393c" opacity="0.6"/><line x1="104.5" y1="54.5" x2="109.0" y2="79.5" stroke="url(#rg6)" stroke-width="10.5" stroke-linecap="round"/><line x1="109.0" y1="79.5" x2="114.8" y2="84.0" stroke="url(#rg6)" stroke-width="9.0" stroke-linecap="round"/><line x1="114.8" y1="84.0" x2="116.0" y2="86.0" stroke="url(#rg6)" stroke-width="7.0" stroke-linecap="round"/><ellipse cx="104.5" cy="56.5" rx="4" ry="2" fill="#34393c" opacity="0.6"/><line x1="97.7" y1="51.1" x2="97.7" y2="55.1" stroke="#34393c" stroke-width="6" stroke-linecap="round"/><ellipse cx="105.7" cy="39.8" rx="11" ry="13" fill="#45808f"/><ellipse cx="104.2" cy="37.3" rx="6.1" ry="7.2" fill="#a8d4e2" opacity="0.25"/><g fill="none" stroke="#8a8a8a" stroke-width="2.2" stroke-linecap="round" stroke-linejoin="round"><path d="M15.5 184.5 L13 191 L9.5 194 L6 193.5 M13.2 191 L18 194.5 L21 198 M14.8 185.5 L11 186 L8.5 188.5 M15.5 186 L18.5 188.5 L21.5 187"/></g><ellipse cx="16.6" cy="182.6" rx="1.8" ry="2.2" fill="#8a8a8a"/></svg><div class="lbl">Uppercut Jab</div></div>
<div class="card" style="left:87px;top:841px"><svg width="180" height="203" style="left:0;top:0"><defs><linearGradient id="fl10" x1="0" y1="0" x2="0" y2="1"><stop offset="0" stop-color="#bdbdbd"/><stop offset="0.35" stop-color="#c6c6c6"/><stop offset="1" stop-color="#cacaca"/></linearGradient><linearGradient id="wl10" x1="0" y1="0" x2="0" y2="1"><stop offset="0" stop-color="#a3a3a3"/><stop offset="0.75" stop-color="#9e9e9e"/><stop offset="1" stop-color="#979797"/></linearGradient></defs><rect width="180" height="115" fill="url(#wl10)"/><rect y="115" width="180" height="88" fill="url(#fl10)"/><rect y="115" width="180" height="88" fill="url(#spk)" mask="url(#spkmask)"/><defs><linearGradient id="rg7" gradientUnits="userSpaceOnUse" x1="68" y1="0" x2="112" y2="0"><stop offset="0" stop-color="#5d9db2"/><stop offset="0.5" stop-color="#45808f"/><stop offset="1" stop-color="#2b5666"/></linearGradient></defs><line x1="98.0" y1="100.0" x2="102.0" y2="138.0" stroke="url(#rg7)" stroke-width="14" stroke-linecap="round"/><line x1="102.0" y1="138.0" x2="100.0" y2="176.0" stroke="url(#rg7)" stroke-width="11" stroke-linecap="round"/><path d="M96.9,180.6 C97.9,182.6 107.8,186.3 110.1,186.9 C112.3,187.5 113.1,185.9 113.7,185.1 C114.2,184.3 115.4,182.9 113.9,181.1 C112.5,179.3 105.3,171.5 103.1,171.4 C100.8,171.4 96.0,178.5 96.9,180.6 Z" fill="url(#rg7)"/><ellipse cx="102.0" cy="139.0" rx="6" ry="2.4" fill="#34393c"/><line x1="82.0" y1="100.0" x2="82.0" y2="138.0" stroke="url(#rg7)" stroke-width="14" stroke-linecap="round"/><line x1="82.0" y1="138.0" x2="82.0" y2="178.0" stroke="url(#rg7)" stroke-width="11" stroke-linecap="round"/><path d="M76.6,178.8 C75.6,180.8 79.5,190.5 80.5,192.5 C81.6,194.5 83.4,194.1 84.3,194.0 C85.2,193.8 87.0,193.7 87.5,191.5 C87.9,189.3 88.9,178.9 87.4,177.2 C86.0,175.5 77.5,176.7 76.6,178.8 Z" fill="url(#rg7)"/><ellipse cx="82.0" cy="139.0" rx="6" ry="2.4" fill="#34393c"/><ellipse cx="90.0" cy="97.0" rx="13" ry="10" fill="url(#rg7)"/><path d="M67.0,57.0 C67.7,54.7 76.4,53.5 79.0,53.0 C81.6,52.5 85.5,52.8 89.0,53.0 C92.5,53.2 107.0,52.9 109.0,55.0 C111.0,57.1 107.2,67.0 106.0,71.0 C104.8,75.0 101.9,86.9 99.0,89.0 C96.1,91.1 84.0,90.9 81.0,89.0 C78.0,87.1 74.6,76.7 73.0,73.0 C71.4,69.3 66.3,59.3 67.0,57.0 Z" fill="url(#rg7)" stroke="#45808f" stroke-width="1"/><line x1="77.0" y1="76.0" x2="101.8" y2="75.0" stroke="#34393c" stroke-width="5" stroke-linecap="butt" opacity="0.85"/><line x1="79.0" y1="89.0" x2="101.0" y2="89.0" stroke="#34393c" stroke-width="5.5" stroke-linecap="butt" opacity="1"/><line x1="72.0" y1="58.0" x2="66.0" y2="80.0" stroke="url(#rg7)" stroke-width="10.5" stroke-linecap="round"/><line x1="66.0" y1="80.0" x2="64.0" y2="104.0" stroke="url(#rg7)" stroke-width="9.0" stroke-linecap="round"/><line x1="64.0" y1="104.0" x2="64.0" y2="116.0" stroke="url(#rg7)" stroke-width="7.0" stroke-linecap="round"/><ellipse cx="72.0" cy="60.0" rx="4" ry="2" fill="#34393c" opacity="0.6"/><line x1="104.0" y1="56.0" x2="108.0" y2="80.0" stroke="url(#rg7)" stroke-width="10.5" stroke-linecap="round"/><line x1="108.0" y1="80.0" x2="112.0" y2="104.0" stroke="url(#rg7)" stroke-width="9.0" stroke-linecap="round"/><line x1="112.0" y1="104.0" x2="112.0" y2="116.0" stroke="url(#rg7)" stroke-width="7.0" stroke-linecap="round"/><ellipse cx="104.0" cy="58.0" rx="4" ry="2" fill="#34393c" opacity="0.6"/><line x1="84.0" y1="48.0" x2="84.0" y2="52.0" stroke="#34393c" stroke-width="6" stroke-linecap="round"/><ellipse cx="79.0" cy="36.0" rx="10" ry="12" fill="#45808f"/><ellipse cx="77.5" cy="33.5" rx="5.5" ry="6.6" fill="#a8d4e2" opacity="0.25"/></svg></div>
<div class="card" style="left:287px;top:841px"><svg width="180" height="203" style="left:0;top:0"><defs><linearGradient id="fl11" x1="0" y1="0" x2="0" y2="1"><stop offset="0" stop-color="#bdbdbd"/><stop offset="0.35" stop-color="#c6c6c6"/><stop offset="1" stop-color="#cacaca"/></linearGradient><linearGradient id="wl11" x1="0" y1="0" x2="0" y2="1"><stop offset="0" stop-color="#a3a3a3"/><stop offset="0.75" stop-color="#9e9e9e"/><stop offset="1" stop-color="#979797"/></linearGradient></defs><rect width="180" height="115" fill="url(#wl11)"/><rect y="115" width="180" height="88" fill="url(#fl11)"/><rect y="115" width="180" height="88" fill="url(#spk)" mask="url(#spkmask)"/><defs><linearGradient id="rg8" gradientUnits="userSpaceOnUse" x1="70" y1="0" x2="114" y2="0"><stop offset="0" stop-color="#e07e74"/><stop offset="0.5" stop-color="#cc645b"/><stop offset="1" stop-color="#a14b45"/></linearGradient></defs><line x1="100.0" y1="104.0" x2="104.0" y2="142.0" stroke="url(#rg8)" stroke-width="14" stroke-linecap="round"/><line x1="104.0" y1="142.0" x2="102.0" y2="180.0" stroke="url(#rg8)" stroke-width="11" stroke-linecap="round"/><path d="M98.9,184.6 C99.9,186.6 109.8,190.3 112.1,190.9 C114.3,191.5 115.1,189.9 115.7,189.1 C116.2,188.3 117.4,186.9 115.9,185.1 C114.5,183.3 107.3,175.5 105.1,175.4 C102.8,175.4 98.0,182.5 98.9,184.6 Z" fill="url(#rg8)"/><ellipse cx="104.0" cy="143.0" rx="6" ry="2.4" fill="#55302c"/><line x1="84.0" y1="104.0" x2="84.0" y2="142.0" stroke="url(#rg8)" stroke-width="14" stroke-linecap="round"/><line x1="84.0" y1="142.0" x2="84.0" y2="180.0" stroke="url(#rg8)" stroke-width="11" stroke-linecap="round"/><path d="M78.6,180.8 C77.6,182.8 81.5,192.5 82.5,194.5 C83.6,196.5 85.4,196.1 86.3,196.0 C87.2,195.8 89.0,195.7 89.5,193.5 C89.9,191.3 90.9,180.9 89.4,179.2 C88.0,177.5 79.5,178.7 78.6,180.8 Z" fill="url(#rg8)"/><ellipse cx="84.0" cy="143.0" rx="6" ry="2.4" fill="#55302c"/><ellipse cx="92.0" cy="102.0" rx="13" ry="10" fill="url(#rg8)"/><path d="M65.0,51.0 C66.4,50.3 79.7,59.8 83.0,61.0 C86.3,62.2 89.7,61.5 93.0,61.0 C96.3,60.5 109.2,55.6 111.0,57.0 C112.8,58.4 109.2,68.8 108.0,73.0 C106.8,77.2 103.9,90.7 101.0,93.0 C98.1,95.3 86.5,96.0 83.0,93.0 C79.5,90.0 73.1,71.9 71.0,67.0 C68.9,62.1 63.6,51.7 65.0,51.0 Z" fill="url(#rg8)" stroke="#cc645b" stroke-width="1"/><line x1="76.8" y1="75.0" x2="103.8" y2="78.0" stroke="#55302c" stroke-width="5" stroke-linecap="butt" opacity="0.85"/><line x1="81.0" y1="93.0" x2="103.0" y2="93.0" stroke="#55302c" stroke-width="5.5" stroke-linecap="butt" opacity="1"/><line x1="70.0" y1="52.0" x2="52.0" y2="41.0" stroke="url(#rg8)" stroke-width="6.825" stroke-linecap="round"/><line x1="52.0" y1="41.0" x2="30.0" y2="31.0" stroke="url(#rg8)" stroke-width="5.8500000000000005" stroke-linecap="round"/><line x1="30.0" y1="31.0" x2="24.0" y2="28.0" stroke="url(#rg8)" stroke-width="4.55" stroke-linecap="round"/><ellipse cx="70.0" cy="54.0" rx="4" ry="2" fill="#55302c" opacity="0.6"/><line x1="106.0" y1="58.0" x2="118.0" y2="54.0" stroke="url(#rg8)" stroke-width="6.825" stroke-linecap="round"/><line x1="118.0" y1="54.0" x2="123.0" y2="50.0" stroke="url(#rg8)" stroke-width="5.8500000000000005" stroke-linecap="round"/><line x1="123.0" y1="50.0" x2="125.0" y2="48.0" stroke="url(#rg8)" stroke-width="4.55" stroke-linecap="round"/><ellipse cx="106.0" cy="60.0" rx="4" ry="2" fill="#55302c" opacity="0.6"/><line x1="88.0" y1="56.0" x2="88.0" y2="60.0" stroke="#55302c" stroke-width="6" stroke-linecap="round"/><ellipse cx="86.0" cy="44.0" rx="10" ry="11.5" fill="#cc645b"/><ellipse cx="84.5" cy="41.5" rx="5.5" ry="6.3" fill="#f4b0a8" opacity="0.25"/></svg></div>
<div class="abs" style="left:555px;top:100px;width:15px;height:793px;background:#f1f1f1"></div><div class="abs" style="left:556px;top:250px;width:13px;height:262px;background:#c1c1c1"></div><svg width="10" height="6" style="left:557px;top:107px"><polygon points="1,5 9,5 5,1" fill="#505050"/></svg><svg width="10" height="6" style="left:557px;top:881px"><polygon points="1,1 9,1 5,5" fill="#505050"/></svg><div class="abs" style="left:570px;top:50px;width:1px;height:843px;background:#e0e0e0"></div></div>
<div id="searchbar" class="abs">
<div class="abs" style="left:570px;top:0;width:1px;height:50px;background:#d5d5d5"></div>
<div class="abs" style="left:82px;top:10px;width:190px;height:30px;border:1px solid #bdbdbd;border-radius:2px;background:#fff"></div>
<div class="abs" style="left:93px;top:19px;font-size:12.5px;color:#555">open</div>
<svg width="16" height="16" style="left:249px;top:18px"><circle cx="7" cy="6.5" r="4.6" fill="none" stroke="#5a5a5a" stroke-width="1.9"/><line x1="10.3" y1="9.8" x2="13.6" y2="13.2" stroke="#5a5a5a" stroke-width="2" stroke-linecap="round"/></svg>
<div class="abs" style="left:390px;top:11px;width:109px;height:29px;border:1px solid #c8c8c8;border-radius:2px;background:#fff"></div>
<div class="abs" style="left:405px;top:20px;font-size:12px;color:#777">48 Per page</div>
<svg width="8" height="8" style="left:485px;top:23px"><polygon points="0.5,0.5 6.5,0.5 3.5,5.5" fill="#666"/></svg>
<div class="abs" style="left:504px;top:10px;width:47px;height:30px;border:1px solid #c8c8c8;border-radius:2px;background:#f2f2f2"></div>
<svg width="26" height="14" style="left:515px;top:18px">
<g fill="#555"><circle cx="7" cy="7" r="4.2"/>
<rect x="5.8" y="0.6" width="2.4" height="12.8"/><rect x="0.6" y="5.8" width="12.8" height="2.4"/>
<rect x="5.8" y="0.6" width="2.4" height="12.8" transform="rotate(45 7 7)"/><rect x="5.8" y="0.6" width="2.4" height="12.8" transform="rotate(-45 7 7)"/></g>
<circle cx="7" cy="7" r="1.8" fill="#f2f2f2"/>
<polygon points="16,7 23,7 19.5,10.5" fill="#555"/>
</svg>
</div>
<div id="hdr" class="abs"></div>
<div id="adobe" class="abs">
<svg width="43" height="72" style="left:0;top:0">
<polygon fill="#fff" points="10,31 17.8,31 10,50"/>
<polygon fill="#fff" points="25.2,31 33,31 33,50"/>
<polygon fill="#fff" points="21.4,39.4 26.8,50.3 23.5,50.3 22.1,47 18.3,47"/>
<text x="21.5" y="61.5" fill="#fff" font-size="9" font-weight="bold" text-anchor="middle" font-family="Liberation Sans" textLength="22" lengthAdjust="spacingAndGlyphs">Adobe</text>
</svg>
</div>
<svg width="32" height="36" style="left:82px;top:7px;z-index:5">
<polygon points="15.4,1.6 30.2,10 30.2,27.2 15.4,35.2 0.7,27.2 0.7,10" fill="#f7941e"/>
<polygon points="15.4,3.3 28.6,10.9 28.6,26.3 15.4,33.5 2.3,26.3 2.3,10.9" fill="none" stroke="#3a3a3a" stroke-width="0.9"/>
<ellipse cx="19.5" cy="10.4" rx="1.7" ry="2.1" fill="#333"/>
<path d="M18 13.2 L15.6 20.3" stroke="#333" stroke-width="3.2" stroke-linecap="round"/>
<path d="M16.7 13.5 L11.2 12.6 L8.2 15.6 M17.6 14.3 L21 16.9 L25.2 13.7 M15.4 20.3 L12 24.1 L6.5 21.1 M16.3 20.7 L21.8 22 L24.8 27.5" stroke="#333" stroke-width="1.9" fill="none" stroke-linecap="round" stroke-linejoin="round"/>
</svg>
<div class="abs" style="left:120px;top:6px;z-index:5;color:#fff;font-size:32px;white-space:nowrap;transform-origin:0 0;transform:scaleX(0.905);-webkit-text-stroke:0.25px #333436">mixamo</div>
<div class="nav" style="left:246px;top:19px;z-index:5">Characters</div>
<div class="nav" style="left:339px;top:19px;color:#fff;font-weight:bold;letter-spacing:-0.25px;z-index:5">Animations</div>
<div class="abs" style="left:324px;top:45px;width:97px;height:5px;background:#f7941e;z-index:5"></div>
<svg width="16" height="16" style="left:1046px;top:17px;z-index:5">
<circle cx="8" cy="8" r="7.3" fill="#b4b4b4"/>
<text x="8" y="12.3" font-size="12" font-weight="bold" fill="#333436" text-anchor="middle" font-family="Liberation Sans">?</text>
</svg>
<div class="nav" style="left:1086px;z-index:5;font-size:13px;top:18px">Phil</div>
<svg width="10" height="6" style="left:1110px;top:22px;z-index:5"><polygon points="0,0 10,0 5,6" fill="#b4b4b4"/></svg>
<div id="vp" class="abs"><svg width="381" height="743" style="left:0;top:0">
<defs><filter id="bl3b" x="-20%" y="-20%" width="140%" height="140%"><feGaussianBlur stdDeviation="3"/></filter></defs><defs><linearGradient id="fog" x1="0" y1="0" x2="0" y2="743" gradientUnits="userSpaceOnUse"><stop offset="0" stop-color="#a0a0a0" stop-opacity="1"/><stop offset="0.202" stop-color="#a0a0a0" stop-opacity="1"/><stop offset="0.283" stop-color="#c4c4c4" stop-opacity="1"/><stop offset="0.336" stop-color="#c6c6c6" stop-opacity="0.93"/><stop offset="0.404" stop-color="#c8c8c8" stop-opacity="0.82"/><stop offset="0.471" stop-color="#c9c9c9" stop-opacity="0.66"/><stop offset="0.565" stop-color="#cacaca" stop-opacity="0.42"/><stop offset="0.673" stop-color="#cbcbcb" stop-opacity="0.18"/><stop offset="0.808" stop-color="#cbcbcb" stop-opacity="0.03"/><stop offset="0.9" stop-color="#cbcbcb" stop-opacity="0"/></linearGradient></defs>
<rect width="381" height="743" fill="#cdcdcd"/>
<path d="M0.9 200.0L-7228.5 1000.0M15.5 200.0L-7048.6 1000.0M30.0 200.0L-6869.1 1000.0M44.5 200.0L-6689.9 1000.0M59.0 200.0L-6510.9 1000.0M73.4 200.0L-6332.2 1000.0M87.8 200.0L-6153.8 1000.0M102.3 200.0L-5975.7 1000.0M116.6 200.0L-5797.9 1000.0M131.0 200.0L-5620.4 1000.0M145.3 200.0L-5443.1 1000.0M159.7 200.0L-5266.1 1000.0M174.0 200.0L-5089.4 1000.0M188.2 200.0L-4913.0 1000.0M202.5 200.0L-4736.8 1000.0M216.7 200.0L-4560.9 1000.0M230.9 200.0L-4385.3 1000.0M245.1 200.0L-4210.0 1000.0M259.3 200.0L-4035.0 1000.0M273.4 200.0L-3860.2 1000.0M287.5 200.0L-3685.7 1000.0M301.6 200.0L-3511.5 1000.0M315.7 200.0L-3337.5 1000.0M329.7 200.0L-3163.8 1000.0M343.8 200.0L-2990.4 1000.0M357.8 200.0L-2817.3 1000.0M371.7 200.0L-2644.4 1000.0M385.7 200.0L-2471.8 1000.0M399.6 200.0L-2299.5 1000.0M413.6 200.0L-2127.4 1000.0M427.5 200.0L-1955.6 1000.0M441.3 200.0L-1784.1 1000.0M455.2 200.0L-1612.8 1000.0M469.0 200.0L-1441.8 1000.0M482.8 200.0L-1271.1 1000.0M496.6 200.0L-1100.6 1000.0M510.4 200.0L-930.4 1000.0M524.1 200.0L-760.5 1000.0M537.9 200.0L-590.8 1000.0M551.6 200.0L-421.4 1000.0M565.3 200.0L-252.2 1000.0M578.9 200.0L-83.4 1000.0M592.6 200.0L85.3 1000.0M606.2 200.0L253.7 1000.0M-11.0 167.2L389.0 180.4M-11.0 167.6L389.0 180.9M-11.0 168.1L389.0 181.5M-11.0 168.5L389.0 182.1M-11.0 169.0L389.0 182.7M-11.0 169.5L389.0 183.3M-11.0 169.9L389.0 183.9M-11.0 170.4L389.0 184.5M-11.0 170.9L389.0 185.2M-11.0 171.5L389.0 185.9M-11.0 172.0L389.0 186.5M-11.0 172.5L389.0 187.2M-11.0 173.1L389.0 188.0M-11.0 173.7L389.0 188.7M-11.0 174.2L389.0 189.4M-11.0 174.8L389.0 190.2M-11.0 175.5L389.0 191.0M-11.0 176.1L389.0 191.8M-11.0 176.7L389.0 192.6M-11.0 177.4L389.0 193.5M-11.0 178.1L389.0 194.4M-11.0 178.8L389.0 195.3M-11.0 179.5L389.0 196.2M-11.0 180.2L389.0 197.2M-11.0 181.0L389.0 198.1M-11.0 181.8L389.0 199.1M-11.0 182.6L389.0 200.2M-11.0 183.4L389.0 201.3M-11.0 184.3L389.0 202.4M-11.0 185.2L389.0 203.5M-11.0 186.1L389.0 204.7M-11.0 187.0L389.0 205.9M-11.0 188.0L389.0 207.1M-11.0 189.0L389.0 208.4M-11.0 190.0L389.0 209.7M-11.0 191.1L389.0 211.1M-11.0 192.2L389.0 212.5M-11.0 193.3L389.0 214.0M-11.0 194.5L389.0 215.5M-11.0 195.7L389.0 217.1M-11.0 197.0L389.0 218.8M-11.0 198.3L389.0 220.5M-11.0 199.7L389.0 222.2M-11.0 201.1L389.0 224.1M-11.0 202.6L389.0 226.0M-11.0 204.2L389.0 228.0M-11.0 205.8L389.0 230.1M-11.0 207.5L389.0 232.2M-11.0 209.2L389.0 234.5M-11.0 211.0L389.0 236.8M-11.0 213.0L389.0 239.3M-11.0 215.0L389.0 241.9M-11.0 217.1L389.0 244.6M-11.0 219.3L389.0 247.4M-11.0 221.6L389.0 250.4M-11.0 224.0L389.0 253.5M-11.0 226.5L389.0 256.8M-11.0 229.2L389.0 260.3M-11.0 232.1L389.0 263.9M-11.0 235.1L389.0 267.8M-11.0 238.3L389.0 271.9M-11.0 241.7L389.0 276.3M-11.0 245.2L389.0 280.9M-11.0 249.1L389.0 285.8M-11.0 253.1L389.0 291.0M-11.0 257.5L389.0 296.7M-11.0 262.2L389.0 302.7M-11.0 267.2L389.0 309.1M-11.0 272.6L389.0 316.1M-11.0 278.4L389.0 323.6M-11.0 284.8L389.0 331.8M-11.0 291.6L389.0 340.6M-11.0 299.1L389.0 350.3M-11.0 307.4L389.0 360.9M-11.0 316.4L389.0 372.5M-11.0 326.4L389.0 385.4M-11.0 337.5L389.0 399.7M-11.0 350.0L389.0 415.7M-11.0 363.9L389.0 433.7M-11.0 379.8L389.0 454.2M-11.0 397.9L389.0 477.5M-11.0 418.9L389.0 504.5M-11.0 443.3L389.0 536.0M-11.0 472.3L389.0 573.2M-11.0 507.0L389.0 618.0M-11.0 549.5L389.0 672.7M-11.0 602.7L389.0 741.2M-11.0 671.3L389.0 829.5" stroke="#8f8f8f" stroke-width="1.25" fill="none"/>
<rect width="381" height="743" fill="url(#fog)"/>
<path d="M231.3,486.2 249.5,483.8 273.7,483.2 297.8,487.2 320.0,496.3 334.1,505.4 350.3,513.4 356.3,519.5 350.3,524.5 330.1,530.6 309.9,538.6 297.8,544.7 291.8,545.7 283.7,546.7 269.6,560.8 253.5,566.8 229.3,570.9 225.3,566.8 229.3,556.8 237.4,548.7 249.5,540.6 258.5,526.5 260.6,523.5 249.5,524.5 235.4,528.5 232.3,526.5 232.3,504.3 239.4,499.3 235.4,496.3 232.3,490.2Z M302.9,517.4 332.1,520.5 298.9,535.6 300.3,524.5Z" fill="#6c6c6c" fill-rule="evenodd"/><polygon points="189.0,530.6 198.1,527.5 198.1,548.7 189.0,554.7" fill="#6c6c6c"/>
<defs><clipPath id="legclip"><polygon points="160.5,392.9 170.8,395.5 194.0,405.8 199.1,408.3 188.8,431.5 176.0,457.3 165.7,475.3 168.2,488.2 178.5,508.8 186.3,534.5 187.5,547.4 176.0,550.0 150.2,547.4 147.6,534.5 134.8,506.2 125.7,483.0 124.5,467.6 132.2,441.8 145.1,416.1"/><polygon points="191.4,405.8 212.0,402.7 239.1,403.2 239.1,431.5 235.2,457.3 232.6,483.0 230.0,508.8 228.8,534.5 227.5,560.3 199.1,557.7 197.8,534.5 194.0,508.8 191.4,483.0 191.4,457.3 195.3,431.5"/></clipPath></defs><polygon points="160.5,392.9 170.8,395.5 194.0,405.8 199.1,408.3 188.8,431.5 176.0,457.3 165.7,475.3 168.2,488.2 178.5,508.8 186.3,534.5 187.5,547.4 176.0,550.0 150.2,547.4 147.6,534.5 134.8,506.2 125.7,483.0 124.5,467.6 132.2,441.8 145.1,416.1" fill="#3d3e40"/><polygon points="191.4,405.8 212.0,402.7 239.1,403.2 239.1,431.5 235.2,457.3 232.6,483.0 230.0,508.8 228.8,534.5 227.5,560.3 199.1,557.7 197.8,534.5 194.0,508.8 191.4,483.0 191.4,457.3 195.3,431.5" fill="#454648"/><g clip-path="url(#legclip)" filter="url(#bl3b)"><polygon points="124.5,467.6 139.9,457.3 160.5,488.2 145.1,524.2 132.2,503.6" fill="#525355" opacity="0.45"/><polygon points="201.7,418.6 230.0,410.9 232.6,465.0 217.2,498.5 199.1,465.0" fill="#525355" opacity="0.45"/><polygon points="150.2,524.2 176.0,513.9 186.3,544.8 152.8,544.8" fill="#525355" opacity="0.45"/><polygon points="134.8,423.8 147.6,418.6 145.1,439.2 137.3,436.7" fill="#252627" opacity="0.8"/><polygon points="212.0,436.7 235.2,431.5 232.6,452.1 214.6,452.1" fill="#252627" opacity="0.8"/><polygon points="155.4,390.3 194.0,403.2 186.3,423.8 168.2,416.1" fill="#252627" opacity="0.8"/></g>
<path d="M124.5,570.6 C124.9,566.6 133.0,557.3 137.3,552.5 C141.6,547.8 143.8,544.0 150.2,542.2 C156.6,540.5 169.9,541.8 176.0,542.2 C182.0,542.7 184.5,542.7 186.3,544.8 C188.0,547.0 188.8,551.3 186.3,555.1 C183.7,559.0 176.0,564.6 170.8,568.0 C165.7,571.4 161.4,574.4 155.4,575.7 C149.3,577.1 139.9,577.1 134.8,576.2 C129.6,575.4 124.0,574.5 124.5,570.6 Z" fill="#744629"/><path d="M196.6,560.3 C197.6,555.9 197.0,557.2 201.7,557.2 C206.4,557.2 220.6,556.3 224.9,560.3 C229.2,564.2 227.5,575.3 227.5,580.9 C227.5,586.5 227.5,590.7 224.9,593.8 C222.3,596.8 216.3,598.5 212.0,598.9 C207.7,599.3 201.9,598.9 199.1,596.3 C196.3,593.8 195.7,589.5 195.3,583.5 C194.8,577.4 195.5,564.7 196.6,560.3 Z" fill="#7a4b2c"/><path d="M137.3,555.1 C137.8,551.7 144.2,546.5 150.2,544.8 C156.2,543.1 167.8,544.0 173.4,544.8 C179.0,545.7 184.5,547.4 183.7,550.0 C182.8,552.5 174.2,557.7 168.2,560.3 C162.2,562.8 152.8,566.3 147.6,565.4 C142.5,564.6 136.9,558.6 137.3,555.1 Z" fill="#8f6445" opacity="0.55" filter="url(#bl3b)"/><path d="M201.7,560.3 C205.6,558.3 218.5,559.0 222.3,561.6 C226.2,564.1 226.6,572.9 224.9,575.7 C223.2,578.5 216.3,578.7 212.0,578.3 C207.7,577.9 200.9,576.2 199.1,573.1 C197.4,570.1 197.8,562.2 201.7,560.3 Z" fill="#94694a" opacity="0.55" filter="url(#bl3b)"/><path d="M125.7,571.9 134.8,575.7 155.4,575.2 170.8,568.5 186.3,556.4" stroke="#4a2e1c" stroke-width="1.6" fill="none" opacity="0.7"/><path d="M196.6,583.5 199.1,596.3 212.0,598.9 224.9,593.8" stroke="#4a2e1c" stroke-width="1.6" fill="none" opacity="0.7"/>
<defs><filter id="bl3" x="-20%" y="-20%" width="140%" height="140%"><feGaussianBlur stdDeviation="3"/></filter><filter id="bl1" x="-20%" y="-20%" width="140%" height="140%"><feGaussianBlur stdDeviation="1.2"/></filter><clipPath id="shirtclip"><polygon points="116.6,329.9 119.4,325.2 126.1,326.1 131.8,329.9 148.9,323.3 158.4,316.6 168.0,312.8 172.7,288.1 160.4,280.5 177.5,281.4 202.2,288.1 217.4,295.7 240.3,316.6 253.6,328.0 254.6,333.7 247.9,350.9 240.3,353.7 236.5,356.6 244.1,400.3 234.6,402.3 213.6,401.3 187.0,398.4 173.7,396.5 164.2,392.7 165.1,383.2 158.4,371.8 141.3,352.8 131.8,345.2 126.1,343.3 118.5,339.4"/></clipPath></defs><polygon points="116.6,329.9 119.4,325.2 126.1,326.1 131.8,329.9 148.9,323.3 158.4,316.6 168.0,312.8 172.7,288.1 160.4,280.5 177.5,281.4 202.2,288.1 217.4,295.7 240.3,316.6 253.6,328.0 254.6,333.7 247.9,350.9 240.3,353.7 236.5,356.6 244.1,400.3 234.6,402.3 213.6,401.3 187.0,398.4 173.7,396.5 164.2,392.7 165.1,383.2 158.4,371.8 141.3,352.8 131.8,345.2 126.1,343.3 118.5,339.4" fill="#f1f1f1"/><g clip-path="url(#shirtclip)"><polygon points="137.9,331.1 151.0,321.0 162.7,313.7 174.3,318.0 177.2,335.5 180.1,351.5 184.5,360.3 194.7,357.3 200.5,338.4 209.3,345.7 220.9,351.5 232.6,351.5 239.8,364.6 242.7,400.0 162.7,400.0 148.1,371.9 140.8,351.5" fill="#b9b9bd" filter="url(#bl3)"/><polygon points="197.6,400.0 200.5,371.9 220.9,363.2 244.2,364.6 250.0,400.0" fill="#d2d2d4" filter="url(#bl3)" opacity="0.8"/><path d="M255.8,331.1 250.0,342.8 242.7,353.0" stroke="#9a9a9e" stroke-width="1.6" fill="none"/><path d="M218.0,297.7 210.7,313.7 203.4,331.1" stroke="#d0d0d2" stroke-width="1.2" fill="none"/></g>
<polygon points="119.4,339.4 126.1,343.3 134.7,349.0 131.8,356.6 122.3,366.1 115.6,372.8 109.9,364.2 113.7,350.9" fill="#c88a68"/><path d="M235.5,351.5 C236.8,348.8 252.4,332.7 255.8,331.1 C259.2,329.6 262.5,336.4 264.6,338.4 C266.6,340.5 272.0,346.4 273.3,348.6 C274.6,350.8 275.9,355.3 275.9,357.3 C275.9,359.4 275.0,363.7 273.3,366.1 C271.7,368.5 265.2,375.2 261.7,377.7 C258.1,380.3 246.5,385.9 242.7,387.9 C239.0,390.0 232.2,394.2 229.6,395.2 C227.1,396.2 222.3,397.7 220.9,396.7 C219.5,395.6 217.0,388.2 218.0,386.5 C219.0,384.8 226.2,383.8 229.6,382.1 C233.0,380.4 243.4,374.1 247.1,371.9 C250.8,369.7 260.5,364.7 261.7,363.2 C262.9,361.6 259.3,359.8 257.3,358.8 C255.3,357.8 246.7,355.3 244.2,354.4 C241.7,353.6 234.1,354.2 235.5,351.5 Z" fill="#b47455"/><path d="M218.0,297.7 C220.6,295.3 227.2,305.8 229.6,307.9 C232.1,309.9 240.3,316.0 242.7,318.0 C245.2,320.1 253.0,326.8 254.4,328.2 C255.8,329.6 257.0,330.4 256.6,331.9 C256.1,333.3 251.4,340.7 250.0,342.8 C248.6,344.9 244.2,352.1 242.7,353.0 C241.3,353.9 237.6,352.0 235.5,351.5 C233.3,351.1 223.5,349.2 220.9,348.6 C218.3,348.0 211.0,347.4 209.3,345.7 C207.5,344.0 202.6,335.9 203.4,331.1 C204.3,326.3 215.4,300.0 218.0,297.7 Z" fill="#f2f2f2"/><path d="M256.6,331.9 250.0,342.8 242.7,353.0" stroke="#a0a0a4" stroke-width="1.6" fill="none"/><path d="M83.3,366.1 C84.2,363.6 86.6,360.2 89.9,358.5 C93.3,356.7 99.8,355.5 103.3,355.6 C106.7,355.8 108.8,356.7 110.9,359.4 C112.9,362.1 115.5,368.5 115.6,371.8 C115.8,375.1 113.9,377.8 111.8,379.4 C109.8,381.1 106.6,382.0 103.3,381.7 C99.9,381.4 95.0,378.8 91.8,377.5 C88.7,376.2 85.7,375.6 84.2,373.7 C82.8,371.8 82.3,368.6 83.3,366.1 Z" fill="#c07e60"/><path d="M170.0,377.7 C170.0,376.2 173.0,371.8 174.3,370.5 C175.7,369.1 179.7,366.4 181.6,366.1 C183.5,365.7 188.1,366.9 190.3,367.5 C192.5,368.2 198.0,370.4 200.5,371.9 C203.1,373.4 209.8,378.9 212.2,380.6 C214.6,382.3 220.2,384.8 220.9,386.5 C221.6,388.2 219.9,393.8 218.0,395.2 C216.1,396.6 208.0,398.1 204.9,398.1 C201.8,398.1 194.7,395.4 191.8,395.2 C188.9,395.0 182.2,396.8 180.1,396.7 C178.1,396.5 173.8,394.6 174.3,393.7 C174.8,392.9 182.8,390.4 184.5,389.4 C186.2,388.4 189.0,385.7 188.9,385.0 C188.7,384.3 184.8,383.7 183.1,383.6 C181.4,383.4 175.8,384.2 174.3,383.6 C172.8,382.9 170.0,379.3 170.0,377.7 Z" fill="#c68868"/>
<polygon points="104.2,319.5 117.7,316.8 129.3,312.3 139.2,308.8 149.0,303.4 144.6,297.1 146.3,289.1 151.7,289.1 155.8,294.4 159.8,284.6 167.9,284.6 171.4,290.8 169.6,305.2 167.9,312.3 164.3,315.9 157.1,321.3 151.7,323.1 146.3,326.7 137.4,328.5 131.1,331.2 126.6,328.5 119.5,324.0 111.4,319.5" fill="#80553f"/><polygon points="160.7,285.5 167.9,284.6 171.4,290.8 169.6,305.2 166.1,305.2 165.2,292.6" fill="#b0704f" filter="url(#bl1)"/><polygon points="157.1,279.2 167.0,278.5 175.0,280.1 178.6,283.7 178.2,295.3 176.8,313.2 175.0,319.5 169.6,319.5 173.2,312.3 174.1,295.3 173.2,286.4 168.7,283.7" fill="#f4f4f4" stroke="#b0b0b6" stroke-width="0.6"/><path d="M98.9,308.8 C98.7,304.7 99.2,294.4 99.8,289.1 C100.3,283.7 101.0,276.6 102.4,272.9 C103.9,269.3 107.2,266.6 109.6,264.9 C112.0,263.1 115.7,261.7 118.6,261.3 C121.4,260.8 125.3,260.9 128.4,261.7 C131.5,262.5 136.0,264.8 139.2,266.6 C142.4,268.5 146.8,271.3 149.9,273.8 C153.0,276.4 158.4,281.1 159.8,283.7 C161.1,286.2 159.5,289.2 158.9,290.8 C158.3,292.5 156.8,294.4 155.8,294.4 C154.7,294.4 152.9,291.6 151.7,290.8 C150.6,290.0 149.1,288.9 148.1,289.1 C147.1,289.2 145.5,290.5 145.0,291.7 C144.5,292.9 144.0,295.4 144.6,297.1 C145.2,298.9 149.8,301.6 149.0,303.4 C148.2,305.1 142.1,307.4 139.2,308.8 C136.2,310.1 132.5,311.1 129.3,312.3 C126.1,313.6 121.4,315.8 117.7,316.8 C113.9,317.9 106.8,319.7 104.2,319.5 C101.7,319.4 101.5,317.5 100.6,315.9 C99.8,314.3 99.0,312.8 98.9,308.8 Z" fill="#3b2618"/><path d="M106.9,272.9 118.6,284.6 124.8,301.6" stroke="#5a3b26" stroke-width="1" fill="none" opacity="0.35"/><path d="M115.9,267.5 126.6,278.3 135.6,293.5" stroke="#5a3b26" stroke-width="1" fill="none" opacity="0.35"/><path d="M105.1,284.6 112.3,297.1 115.9,312.3" stroke="#5a3b26" stroke-width="1" fill="none" opacity="0.35"/><path d="M126.6,264.9 139.2,274.7 147.2,287.3" stroke="#5a3b26" stroke-width="1" fill="none" opacity="0.35"/><ellipse cx="149.9" cy="295.3" rx="4.3" ry="6.5" fill="#7d5240"/>
<g fill="#a9a9a9" stroke="none"><path d="M19 597.5c-4.6 0-8 3.2-8 7.3 0 2.6 1.2 4.4 3 5.4v3.8h10v-3.8c1.8-1 3-2.8 3-5.4 0-4.1-3.4-7.3-8-7.3z"/></g><circle cx="15.5" cy="605" r="2" fill="#cdcdcd"/><circle cx="22.5" cy="605" r="2" fill="#cdcdcd"/><path d="M19 608l-2 3h4z" fill="#cdcdcd"/><g fill="none" stroke="#a9a9a9" stroke-width="1.8"><path d="M14 638 A5 5 0 1 0 17 633.4"/><path d="M20 654v10M15 659h10"/><circle cx="18.5" cy="678.5" r="4.8"/><path d="M22 682l3.5 3.5"/><path d="M15.2 696.5 A6 6 0 1 0 22.8 696.5"/><path d="M19 693v7"/></g><g fill="#a9a9a9"><polygon points="20,651.5 17.2,654.8 22.8,654.8"/><polygon points="20,666.5 17.2,663.2 22.8,663.2"/><polygon points="12.5,659 15.8,656.2 15.8,661.8"/><polygon points="27.5,659 24.2,656.2 24.2,661.8"/><polygon points="13.2,631.2 18.6,632.6 14.6,636.6"/><rect x="12" y="717.5" width="10" height="9" rx="1.5"/><polygon points="21,722 27,718 27,726"/></g>
</svg></div>
<div id="ctrl" class="abs">
<div class="abs" style="left:14px;top:19px;width:4px;height:12px;background:#8a8a8a"></div>
<div class="abs" style="left:22px;top:19px;width:4px;height:12px;background:#8a8a8a"></div>
<div class="abs" style="left:39px;top:0;width:1px;height:50px;background:#e6e6e6"></div>
<div class="abs" style="left:51px;top:18.5px;font-size:12.5px;color:#666;white-space:nowrap"><b style="color:#555">134</b> / 268</div>
<div class="abs" style="left:120px;top:23px;width:250px;height:7px;border-radius:4px;background:#e4e4e0"></div>
<div class="abs" style="left:238px;top:20px;width:14px;height:14px;border-radius:50%;background:#8c8c8c"></div>
</div>
<div id="title" class="abs"><div class="abs" style="left:0;top:19px;width:571px;text-align:center;font-size:11.5px;font-weight:bold;letter-spacing:0.2px;color:#333;white-space:nowrap">OPENING A LID ON FLEXSIM_OPERATOR</div></div>
<div id="side" class="abs">
<div class="abs" style="left:0;top:0;width:190px;height:1px;background:#e4e4e0"></div>
<div class="btn" style="left:9px;top:10px;height:31px;line-height:31px;background:#ff9233;color:#fff">DOWNLOAD</div>
<div class="btn" style="left:9px;top:47px;height:31px;line-height:29px;background:#f2f2f2;color:#666;border:1px solid #cfcfcf;font-size:11.5px">UPLOAD CHARACTER</div>
<div class="abs" style="left:0;top:87px;width:191px;height:1px;background:#e6e6e6"></div>
<div class="abs" style="left:10px;top:98px;width:170px;height:323px;border:1px solid #dcdcdc">
 <div class="abs" style="left:10px;top:10px;font-size:12px;font-weight:bold;color:#333;white-space:nowrap">Opening A Lid</div>
 <svg width="12" height="12" style="left:145px;top:10px"><path d="M1.5 1.5L10.5 10.5M10.5 1.5L1.5 10.5" stroke="#9a9a9a" stroke-width="2.6"/></svg>
 <div class="abs" style="left:0;top:32px;width:168px;height:1px;background:#e2e2e2"></div>
 <div class="lab" style="top:46px">Body Type</div><div class="val" style="top:46px">0</div>
 <div class="trk" style="top:66px"></div><div class="thm" style="left:10px;top:63px"></div>
 <div class="lab" style="top:91px">Lid Weight</div><div class="val" style="top:91px">50</div>
 <div class="trk" style="top:111px"></div><div class="thm" style="left:77px;top:108px"></div>
 <div class="lab" style="top:136px">Overdrive</div><div class="val" style="top:136px">50</div>
 <div class="trk" style="top:156px"></div><div class="thm" style="left:77px;top:153px"></div>
 <div class="lab" style="top:181px">Character Arm-Space</div><div class="val" style="top:181px">50</div>
 <div class="trk" style="top:201px"></div><div class="thm" style="left:77px;top:198px"></div>
 <div class="lab" style="top:226px">Trim <span style="font-size:10.5px;color:#aaa;margin-left:1px">269 total frames</span></div>
 <div class="trk" style="top:246px"></div>
 <div class="abs" style="left:50px;top:246px;width:67px;height:7px;background:#c4c4c4"></div>
 <div class="thm" style="left:43px;top:243px"></div><div class="thm" style="left:110px;top:243px"></div>
 <div class="lab" style="top:264px">0</div><div class="val" style="top:264px">100</div>
 <div class="abs" style="left:10px;top:293px;width:12px;height:12px;border:1px solid #b5b5b5;border-radius:2px;background:#f4f4f4"></div>
 <div class="lab" style="left:25px;top:295px">Mirror</div>
</div>
</div>
<div id="psb" class="abs">
<div class="abs" style="left:2px;top:17px;width:13px;height:858px;background:#c1c1c1"></div>
<svg width="10" height="6" style="left:3px;top:6px"><polygon points="1,5 9,5 5,1" fill="#a3a3a3"/></svg>
<svg width="10" height="6" style="left:3px;top:881px"><polygon points="1,1 9,1 5,5" fill="#505050"/></svg>
</div>
</body></html>
